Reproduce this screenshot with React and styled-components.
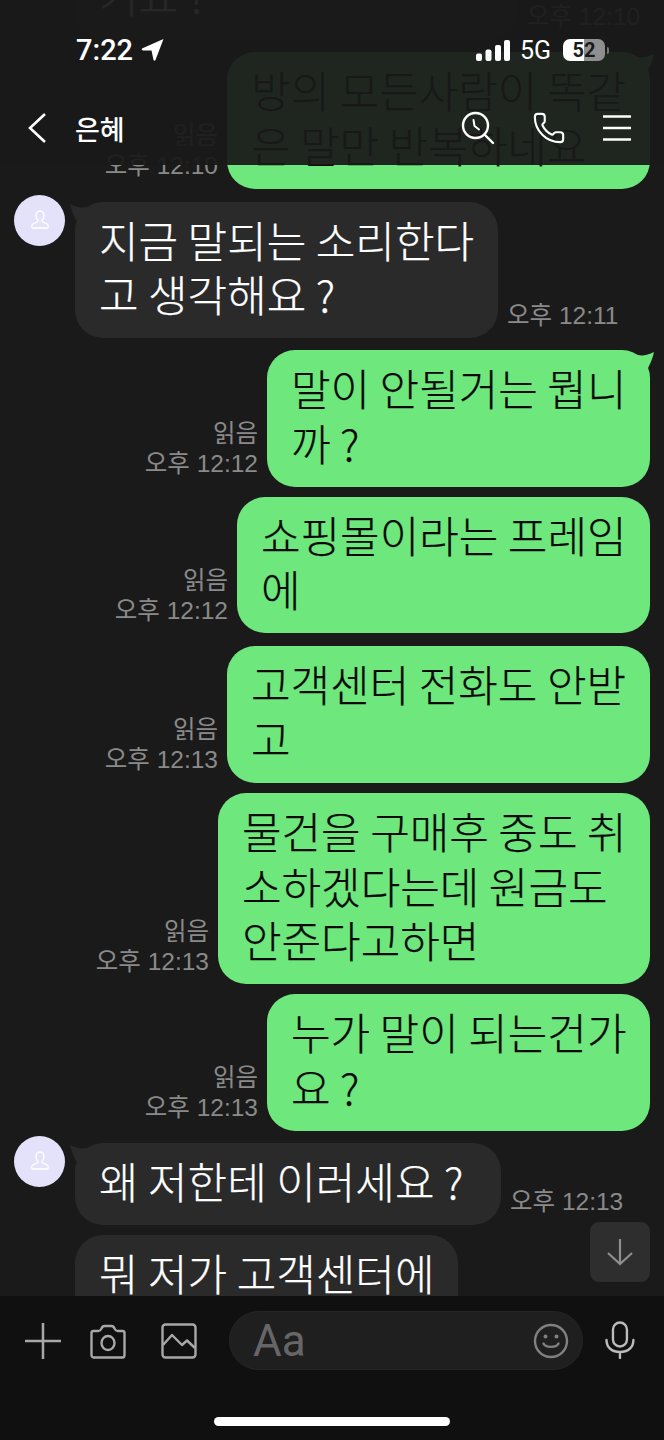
import React from "react";
import styled, { createGlobalStyle } from "styled-components";
import { Phone } from "lucide-react";

const messages = [
  { mine: false, top: -97.5, w: 443, lines: ["\u00a0", "기요 ?"], time: "오후 12:10" },
  { mine: true, top: 13, w: 423, tail: true, lines: ["방의 모든사람이 똑같", "은 말만 반복하네요"], time: "오후 12:10", read: true },
  { mine: false, top: 13, w: 423, avatar: true, tail: true, lines: ["지금 말되는 소리한다", "고 생각해요 ?"], time: "오후 12:11" },
  { mine: true, top: 12, w: 383, tail: true, lines: ["말이 안될거는 뭡니", "까 ?"], time: "오후 12:12", read: true },
  { mine: true, top: 10, w: 413, lines: ["쇼핑몰이라는 프레임", "에"], time: "오후 12:12", read: true },
  { mine: true, top: 13, w: 423, lines: ["고객센터 전화도 안받", "고"], time: "오후 12:13", read: true },
  { mine: true, top: 10.5, w: 432, lines: ["물건을 구매후 중도 취", "소하겠다는데 원금도", "안준다고하면"], time: "오후 12:13", read: true },
  { mine: true, top: 10, w: 383, lines: ["누가 말이 되는건가", "요 ?"], time: "오후 12:13", read: true },
  { mine: false, top: 12, w: 426, avatar: true, tail: true, lines: ["왜 저한테 이러세요 ?"], time: "오후 12:13" },
  { mine: false, top: 10, w: 383, lines: ["뭐 저가 고객센터에", "\u00a0"] },
];

function App() {
  return (
    <Screen>
      <GlobalStyle />
      <ChatList>
        {messages.map((m, i) => (
          <Row key={i} $mine={m.mine} $top={m.top}>
            {m.avatar && (
              <Avatar>
                <svg width="24" height="24" viewBox="0 0 24 24" fill="none" stroke="#fff" strokeWidth="1.3">
                  <path d="M12 3c-2.6 0-4 2-4 4.4 0 2 .8 3.6 1.8 4.6.5.6.3 1.6-.4 2-1.600.8-4.400 1.400-5.400 3-.4.7-.3 3 .4 3h15.200c.7 0 .8-2.300.4-3-1-1.600-3.800-2.200-5.400-3-.7-.4-.9-1.400-.4-2 1-1 1.800-2.600 1.800-4.600C16 5 14.600 3 12 3z" />
                </svg>
              </Avatar>
            )}
            {m.mine && (m.time || m.read) && <Meta read={m.read} time={m.time} />}
            <Bubble $mine={m.mine} $w={m.w}>
              {m.tail && (
                <Tail $mine={m.mine} viewBox="0 0 16 16">
                  <path d={m.mine ? "M0 3 C5 4 10 3 16 0 C15 5 13 10 10 16 L0 16 Z" : "M16 3 C11 4 6 3 0 0 C1 5 3 10 6 16 L16 16 Z"} />
                </Tail>
              )}
              {m.lines.map((line, j) => (
                <Line key={j}>{line}</Line>
              ))}
            </Bubble>
            {!m.mine && m.time && <Meta time={m.time} />}
          </Row>
        ))}
        <ScrollDown>
          <svg width="32" height="32" viewBox="0 0 32 32" fill="none" stroke="#8e8e8e" strokeWidth="2.2">
            <path d="M16 3v25M4 17l12 11 12-11" />
          </svg>
        </ScrollDown>
      </ChatList>

      <TopOverlay>
        <StatusBar>
          <StatusLeft>
            <Clock>7:22</Clock>
            <svg width="24" height="24" viewBox="0 0 24 24" fill="#fff">
              <path d="M23.500 1 L2 10.500 Q1 12 3 12.500 L11.500 12.500 L13.500 22 Q14.500 23.500 15.500 22 Z" />
            </svg>
          </StatusLeft>
          <StatusRight>
            <svg width="34" height="21" viewBox="0 0 34 21" fill="#fff">
              <rect x="0" y="13.500" width="6" height="7.500" rx="2" />
              <rect x="9.500" y="9.500" width="6" height="11.500" rx="2" />
              <rect x="19" y="5" width="6" height="16" rx="2" />
              <rect x="28" y="0" width="6" height="21" rx="2" />
            </svg>
            <Network>5G</Network>
            <Battery>52</Battery>
            <BatteryNub />
          </StatusRight>
        </StatusBar>
        <NavBar>
          <NavLeft>
            <svg width="20" height="32" viewBox="0 0 20 32" fill="none" stroke="#fff" strokeWidth="2.6">
              <path d="M18 2 L3 16 L18 30" />
            </svg>
            <Title>은혜</Title>
          </NavLeft>
          <NavRight>
            <svg width="34" height="34" viewBox="0 0 34 34" fill="none" stroke="#fff" strokeWidth="2.400" strokeLinecap="round">
              <circle cx="14.500" cy="14.500" r="12.500" />
              <path d="M23.500 23.500 L32 32" />
              <path d="M12.500 9 L13.500 15 L18 18.500" strokeWidth="2" />
            </svg>
            <Phone size={34} color="#fff" strokeWidth={1.5} />
            <svg width="28" height="26" viewBox="0 0 28 26" stroke="#fff" strokeWidth="2.600">
              <path d="M0 1.500h28M0 13h28M0 24.500h28" />
            </svg>
          </NavRight>
        </NavBar>
      </TopOverlay>

      <Composer>
        <Tools>
          <svg width="36" height="36" viewBox="0 0 36 36" stroke="#a8a8a8" strokeWidth="2.500">
            <path d="M0 18h36M18 0v36" />
          </svg>
          <svg width="36" height="36" viewBox="0 0 36 36" fill="none" stroke="#a8a8a8" strokeWidth="2.400" strokeLinejoin="round">
            <path d="M3.500 8h5c1.500 0 2-.6 3-2.500.6-1.500 1.500-2.500 3-2.500h7c1.500 0 2.400 1 3 2.500 1 1.900 1.500 2.500 3 2.500h5c1.500 0 2 1 2 2v22c0 1.500-1 2.500-2 2.500H3.500c-1 0-2-1-2-2.500V10c0-1 .5-2 2-2z" />
            <ellipse cx="18" cy="20" rx="6.500" ry="7" />
          </svg>
          <ImageIcon width="36" height="36" viewBox="0 0 36 36" fill="none" stroke="#a8a8a8" strokeWidth="2.400" strokeLinejoin="round">
            <rect x="1.500" y="1.500" width="33" height="33" rx="3" />
            <path d="M2 22 L11 12 L21 22 L26 17.500 L34 25" />
          </ImageIcon>
        </Tools>
        <InputBox>
          <Placeholder>Aa</Placeholder>
          <svg width="36" height="36" viewBox="0 0 36 36" fill="none" stroke="#808080" strokeWidth="2.400" strokeLinecap="round">
            <circle cx="18" cy="18" r="16" />
            <path d="M10.500 20.500c2 4.500 13 4.500 15 0" />
            <circle cx="12.500" cy="13.500" r="0.800" fill="#808080" />
            <circle cx="23.500" cy="13.500" r="0.800" fill="#808080" />
          </svg>
        </InputBox>
        <svg width="30" height="38" viewBox="0 0 30 38" fill="none" stroke="#bbbbbb" strokeWidth="2.400" strokeLinecap="round">
          <rect x="8" y="1.500" width="14" height="24" rx="7" />
          <path d="M1.500 19c0 8 6 12 13.500 12s13.500-4 13.500-12M15 31v6" />
        </svg>
      </Composer>
      <HomeArea>
        <HomeBar />
      </HomeArea>
    </Screen>
  );
}

function Meta({ read, time }) {
  return (
    <MetaBox>
      {read && <span>읽음</span>}
      <span>{time}</span>
    </MetaBox>
  );
}

export default App;

const GlobalStyle = createGlobalStyle`
  html, body { margin: 0; padding: 0; background: #1a1a1a; }
`;

const Screen = styled.div`
  position: relative;
  width: 664px;
  height: 1440px;
  overflow: hidden;
  display: flex;
  flex-direction: column;
  background: #1a1a1a;
  font-family: "Noto Sans CJK KR", "Noto Sans", sans-serif;
`;

const ChatList = styled.div`
  position: relative;
  flex: 1;
  min-height: 0;
  overflow: hidden;
  display: flex;
  flex-direction: column;
`;

const Row = styled.div`
  position: relative;
  flex: none;
  display: flex;
  align-items: flex-end;
  justify-content: ${(p) => (p.$mine ? "flex-end" : "flex-start")};
  gap: 9px;
  margin-top: ${(p) => p.$top}px;
  padding: ${(p) => (p.$mine ? "0 14px 0 0" : "0 0 0 75px")};
`;

const Avatar = styled.div`
  position: absolute;
  left: 14px;
  top: -7px;
  width: 51px;
  height: 51px;
  border-radius: 50%;
  background: #e4e2fb;
  display: flex;
  align-items: center;
  justify-content: center;
`;

const Bubble = styled.div`
  position: relative;
  flex: none;
  box-sizing: border-box;
  width: ${(p) => p.$w}px;
  padding: 10px 10px 17.500px 24px;
  border-radius: 28px;
  background: ${(p) => (p.$mine ? "#6ee77c" : "#2a2a2a")};
  color: ${(p) => (p.$mine ? "#0a0a0a" : "#ffffff")};
  font-size: 43px;
  font-weight: 300;
  -webkit-text-stroke: 0.25px currentColor;
  line-height: 54.500px;
  white-space: nowrap;
`;

const Tail = styled.svg`
  position: absolute;
  top: 2px;
  ${(p) => (p.$mine ? "right: -4px;" : "left: -5px;")}
  width: 16px;
  height: 16px;
  fill: ${(p) => (p.$mine ? "#6ee77c" : "#2a2a2a")};
`;

const Line = styled.div``;

const MetaBox = styled.div`
  display: flex;
  flex-direction: column;
  align-items: flex-end;
  color: #8a8a8a;
  font-family: "Liberation Sans", "Noto Sans CJK KR", sans-serif;
  font-size: 24.500px;
  line-height: 30px;
  white-space: nowrap;
  padding-bottom: 7.500px;
`;

const ScrollDown = styled.div`
  position: absolute;
  right: 14px;
  bottom: 14px;
  width: 60px;
  height: 60px;
  border-radius: 9px;
  background: #2e2e2e;
  display: flex;
  align-items: center;
  justify-content: center;
`;

const TopOverlay = styled.div`
  position: absolute;
  left: 0;
  right: 0;
  top: 0;
  height: 165px;
  display: flex;
  flex-direction: column;
  background: rgba(26, 26, 26, 0.94);
`;

const StatusBar = styled.div`
  display: flex;
  justify-content: space-between;
  align-items: center;
  height: 44px;
  margin-top: 28px;
  padding: 0 55px 0 76px;
`;

const StatusLeft = styled.div`
  display: flex;
  align-items: center;
  gap: 7px;
`;

const Clock = styled.span`
  color: #fff;
  font-family: Roboto, "Noto Sans", sans-serif;
  font-size: 29px;
  font-weight: 500;
`;

const StatusRight = styled.div`
  display: flex;
  align-items: center;
`;

const Network = styled.span`
  margin: 0 12px 0 10px;
  color: #fff;
  font-family: Roboto, "Noto Sans", sans-serif;
  font-size: 25px;
`;

const Battery = styled.span`
  width: 42px;
  height: 22px;
  border-radius: 7px;
  background: linear-gradient(90deg, #fff 0 50%, #8f8f8f 50% 100%);
  color: #1a1a1a;
  font-family: Roboto, "Noto Sans", sans-serif;
  font-size: 20px;
  font-weight: 700;
  line-height: 22px;
  text-align: center;
`;

const BatteryNub = styled.span`
  width: 2px;
  height: 7px;
  margin-left: 2px;
  border-radius: 0 2px 2px 0;
  background: #777;
`;

const NavBar = styled.div`
  display: flex;
  justify-content: space-between;
  align-items: center;
  height: 36px;
  margin-top: 38px;
  padding: 0 33px 0 27px;
`;

const NavLeft = styled.div`
  display: flex;
  align-items: center;
  gap: 28px;
`;

const Title = styled.span`
  color: #fff;
  font-size: 27px;
  font-weight: 500;
`;

const NavRight = styled.div`
  display: flex;
  align-items: center;
  gap: 37px;
`;

const Composer = styled.div`
  flex: none;
  height: 74px;
  padding: 15px 29px 0 25px;
  box-sizing: border-box;
  display: flex;
  align-items: flex-start;
  background: #101010;
  & > svg { margin: 10px 0 0 22px; }
`;

const Tools = styled.div`
  display: flex;
  align-items: center;
  gap: 29px;
  height: 59px;
  margin-right: 32px;
`;

const ImageIcon = styled.svg`
  margin-left: 6px;
`;

const InputBox = styled.div`
  box-sizing: border-box;
  width: 355px;
  height: 59px;
  padding: 0 13px 0 23px;
  display: flex;
  align-items: center;
  justify-content: space-between;
  border: 1px solid #262626;
  border-radius: 30px;
  background: #1f1f1f;
`;

const Placeholder = styled.span`
  color: #666;
  font-family: Roboto, "Noto Sans", sans-serif;
  font-size: 44px;
`;

const HomeArea = styled.div`
  flex: none;
  height: 70px;
  box-sizing: border-box;
  display: flex;
  justify-content: center;
  align-items: flex-end;
  padding-bottom: 14px;
  background: #101010;
`;

const HomeBar = styled.div`
  width: 236px;
  height: 9px;
  border-radius: 5px;
  background: #fff;
`;
